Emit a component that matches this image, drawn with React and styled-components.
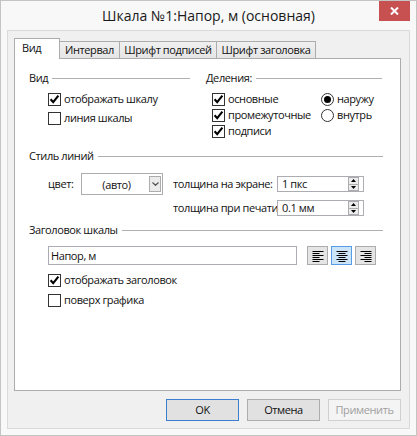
import React from "react";
import styled, { createGlobalStyle } from "styled-components";

const GlobalStyle = createGlobalStyle`
  html, body { margin: 0; padding: 0; background: #f7f7f7; }
  body {
    font-family: "Open Sans", "Noto Sans", sans-serif;
    font-size: 11px;
    letter-spacing: -0.4px;
    color: #111;
  }
  * { box-sizing: border-box; }
`;

const Window = styled.div`
  width: 417px;
  height: 436px;
  border: 1px solid #c4c4c4;
  background: #f8f8f8;
  padding: 0 6px 6px;
  display: flex;
  flex-direction: column;
`;

const TitleBar = styled.div`
  height: 29px;
  flex: none;
  display: grid;
  grid-template-columns: 1fr auto 1fr;
`;

const Title = styled.div`
  grid-column: 2;
  font-size: 14px;
  letter-spacing: 0;
  line-height: 20px;
  padding-top: 5px;
  color: #1a1a1a;
  white-space: nowrap;
`;

const CloseButton = styled.div`
  grid-column: 3;
  justify-self: end;
  width: 31px;
  height: 20px;
  background: #c75050;
  display: flex;
  align-items: center;
  justify-content: center;
`;

const Client = styled.div`
  flex: 1;
  border: 1px solid #dadada;
  background: #f0f0f0;
  padding: 7px 8px 7px 6px;
  display: flex;
  flex-direction: column;
`;

const TabStrip = styled.div`
  display: flex;
  align-items: flex-end;
  height: 21px;
  margin-bottom: -1px;
  position: relative;
  z-index: 1;
  flex: none;
`;

const Tab = styled.div`
  position: relative;
  z-index: ${(p) => (p.$active ? 2 : 1)};
  width: ${(p) => p.$w}px;
  height: ${(p) => (p.$active ? 21 : 17)}px;
  margin-bottom: ${(p) => (p.$active ? 0 : 1)}px;
  margin-left: ${(p) => (p.$first ? 0 : -1)}px;
  border: 1px solid #acacac;
  border-bottom: none;
  background: ${(p) =>
    p.$active ? "#fff" : "linear-gradient(#f0f0f0, #e5e5e5)"};
  line-height: 16px;
  padding-top: ${(p) => (p.$active ? 1 : 0)}px;
  padding-left: ${(p) => (p.$active ? 7 : 0)}px;
  text-align: ${(p) => (p.$active ? "left" : "center")};
  white-space: nowrap;
`;

const Pane = styled.div`
  flex: 1;
  background: #fff;
  border: 1px solid #acacac;
  padding: 11px 17px 0 14px;
  display: flex;
  flex-direction: column;
`;

const GroupHeader = styled.div`
  display: flex;
  align-items: center;
  gap: 4px;
  height: 16px;
  line-height: 16px;
  white-space: nowrap;
  margin-top: ${(p) => p.$mt || 0}px;
  &::after {
    content: "";
    flex: 1;
    height: 1px;
    background: #b0b0b0;
  }
`;

const TopSection = styled.div`
  display: grid;
  grid-template-columns: 161px 176px;
  column-gap: 16px;
`;

const CheckList = styled.div`
  margin-top: ${(p) => p.$mt || 0}px;
  padding-left: ${(p) => p.$indent}px;
  display: flex;
  flex-direction: column;
  gap: ${(p) => p.$gap}px;
`;

const DivisionGrid = styled.div`
  margin-top: 5px;
  padding-left: 6px;
  display: grid;
  grid-template-columns: 109px auto;
  grid-auto-rows: 16px;
`;

const OptionRow = styled.label`
  display: flex;
  align-items: center;
  gap: 3px;
  height: 16px;
  line-height: 16px;
  white-space: nowrap;
`;

const Box = styled.span`
  width: 13px;
  height: 13px;
  flex: none;
  border: 1px solid #333;
  background: #fff;
  display: inline-flex;
  align-items: center;
  justify-content: center;
`;

const RadioCircle = styled.span`
  width: 13px;
  height: 13px;
  flex: none;
  border-radius: 50%;
  border: 1px solid #333;
  background: #fff;
  display: inline-flex;
  align-items: center;
  justify-content: center;
  &::after {
    content: "";
    width: 7px;
    height: 7px;
    border-radius: 50%;
    background: ${(p) => (p.$on ? "#000" : "transparent")};
  }
`;

const StyleGrid = styled.div`
  margin-top: 8px;
  padding-left: 19px;
  display: grid;
  grid-template-columns: 33px 82px 114px 87px;
  grid-auto-rows: 24px;
  align-items: center;
`;

const FieldLabel = styled.span`
  grid-column: ${(p) => p.$col};
  padding-left: ${(p) => p.$pl || 0}px;
  white-space: nowrap;
  line-height: 16px;
`;

const Combo = styled.div`
  height: 22px;
  border: 1px solid #acacac;
  background: #fff;
  padding: 2px 1px 1px 2px;
  display: flex;
  align-items: stretch;
`;

const ComboText = styled.span`
  flex: 1;
  text-align: center;
  line-height: 17px;
`;

const ComboArrow = styled.span`
  width: 12px;
  height: 16px;
  border: 1px solid #acacac;
  background: #ececec;
  display: flex;
  align-items: center;
  justify-content: center;
`;

const Spin = styled.div`
  grid-column: 4;
  height: 16px;
  border: 1px solid #abadb3;
  background: #fff;
  display: flex;
  align-items: stretch;
`;

const SpinText = styled.span`
  flex: 1;
  padding-left: 4px;
  line-height: 14px;
`;

const SpinButtons = styled.span`
  width: 11px;
  margin-right: 4px;
  display: flex;
  flex-direction: column;
`;

const SpinButton = styled.span`
  flex: 1;
  border: 1px solid #acacac;
  background: #ececec;
  display: flex;
  align-items: center;
  justify-content: center;
  & + & {
    border-top: none;
  }
`;

const TitleRow = styled.div`
  margin-top: 8px;
  padding-left: 19px;
  display: flex;
  align-items: center;
`;

const TextInput = styled.div`
  width: 249px;
  height: 19px;
  border: 1px solid #abadb3;
  background: #fff;
  padding-left: 2px;
  line-height: 17px;
`;

const AlignGroup = styled.div`
  margin-left: 10px;
  display: flex;
  gap: 3px;
`;

const AlignButton = styled.div`
  width: 21px;
  height: 19px;
  border: 1px solid ${(p) => (p.$on ? "#569de5" : "#acacac")};
  background: ${(p) => (p.$on ? "#cce4f7" : "#e5e5e5")};
  display: flex;
  align-items: center;
  justify-content: center;
`;

const ButtonRow = styled.div`
  margin-top: 8px;
  height: 22px;
  flex: none;
  display: flex;
  justify-content: flex-end;
  gap: 8px;
`;

const DialogButton = styled.div`
  width: 73px;
  height: 22px;
  border: 1px solid
    ${(p) => (p.$default ? "#3c7fd1" : p.$disabled ? "#d0d0d0" : "#adadad")};
  background: ${(p) => (p.$disabled ? "#f4f4f4" : "#e1e1e1")};
  color: ${(p) => (p.$disabled ? "#a0a0a0" : "#111")};
  display: flex;
  align-items: center;
  justify-content: center;
  line-height: 16px;
`;

const CheckMark = () => (
  <svg width="11" height="11" viewBox="0 0 11 11">
    <path d="M1.6 5.2 L4.2 8.2 L9.4 1.6" stroke="#000" strokeWidth="2.1" fill="none" />
  </svg>
);

const Check = ({ checked, children }) => (
  <OptionRow>
    <Box>{checked && <CheckMark />}</Box>
    {children}
  </OptionRow>
);

const Radio = ({ on, children }) => (
  <OptionRow>
    <RadioCircle $on={on} />
    {children}
  </OptionRow>
);

const SpinBox = ({ value }) => (
  <Spin>
    <SpinText>{value}</SpinText>
    <SpinButtons>
      <SpinButton>
        <svg width="5" height="3" viewBox="0 0 5 3">
          <path d="M2.5 0 L5 3 L0 3 Z" fill="#000" />
        </svg>
      </SpinButton>
      <SpinButton>
        <svg width="5" height="3" viewBox="0 0 5 3">
          <path d="M0 0 L5 0 L2.5 3 Z" fill="#000" />
        </svg>
      </SpinButton>
    </SpinButtons>
  </Spin>
);

const AlignIcon = ({ mode }) => {
  const lines = [11, 7, 11, 7, 11, 7];
  return (
    <svg width="12" height="12" viewBox="0 0 12 12">
      {lines.map((w, i) => {
        const x = mode === "left" ? 0.5 : mode === "right" ? 11.5 - w : (12 - w) / 2;
        return (
          <rect key={i} x={x} y={1 + i * 2} width={w} height="1" fill="#000" />
        );
      })}
    </svg>
  );
};

export default function App() {
  return (
    <>
      <GlobalStyle />
      <Window>
        <TitleBar>
          <Title>Шкала №1:Напор, м (основная)</Title>
          <CloseButton>
            <svg width="9" height="8" viewBox="0 0 9 8">
              <path d="M1 0.5 L8 7.5 M8 0.5 L1 7.5" stroke="#fff" strokeWidth="2" />
            </svg>
          </CloseButton>
        </TitleBar>
        <Client>
          <TabStrip>
            <Tab $active $first $w={46}>Вид</Tab>
            <Tab $w={61}>Интервал</Tab>
            <Tab $w={98}>Шрифт подписей</Tab>
            <Tab $w={100}>Шрифт заголовка</Tab>
          </TabStrip>
          <Pane>
            <TopSection>
              <div>
                <GroupHeader>Вид</GroupHeader>
                <CheckList $mt={5} $indent={19} $gap={3}>
                  <Check checked>отображать шкалу</Check>
                  <Check>линия шкалы</Check>
                </CheckList>
              </div>
              <div>
                <GroupHeader>Деления:</GroupHeader>
                <DivisionGrid>
                  <Check checked>основные</Check>
                  <Radio on>наружу</Radio>
                  <Check checked>промежуточные</Check>
                  <Radio>внутрь</Radio>
                  <Check checked>подписи</Check>
                </DivisionGrid>
              </div>
            </TopSection>

            <GroupHeader $mt={9}>Стиль линий</GroupHeader>
            <StyleGrid>
              <FieldLabel $col={1}>цвет:</FieldLabel>
              <Combo>
                <ComboText>(авто)</ComboText>
                <ComboArrow>
                  <svg width="7" height="4" viewBox="0 0 7 4">
                    <path d="M0.5 0.5 L3.5 3.3 L6.5 0.5" stroke="#555" strokeWidth="1.2" fill="none" />
                  </svg>
                </ComboArrow>
              </Combo>
              <FieldLabel $col={3} $pl={10}>толщина на экране:</FieldLabel>
              <SpinBox value="1 пкс" />
              <FieldLabel $col={3} $pl={10}>толщина при печати:</FieldLabel>
              <SpinBox value="0.1 мм" />
            </StyleGrid>

            <GroupHeader $mt={2}>Заголовок шкалы</GroupHeader>
            <TitleRow>
              <TextInput>Напор, м</TextInput>
              <AlignGroup>
                <AlignButton><AlignIcon mode="left" /></AlignButton>
                <AlignButton $on><AlignIcon mode="center" /></AlignButton>
                <AlignButton><AlignIcon mode="right" /></AlignButton>
              </AlignGroup>
            </TitleRow>
            <CheckList $mt={7} $indent={19} $gap={4}>
              <Check checked>отображать заголовок</Check>
              <Check>поверх графика</Check>
            </CheckList>
          </Pane>
          <ButtonRow>
            <DialogButton $default>OK</DialogButton>
            <DialogButton>Отмена</DialogButton>
            <DialogButton $disabled>Применить</DialogButton>
          </ButtonRow>
        </Client>
      </Window>
    </>
  );
}
